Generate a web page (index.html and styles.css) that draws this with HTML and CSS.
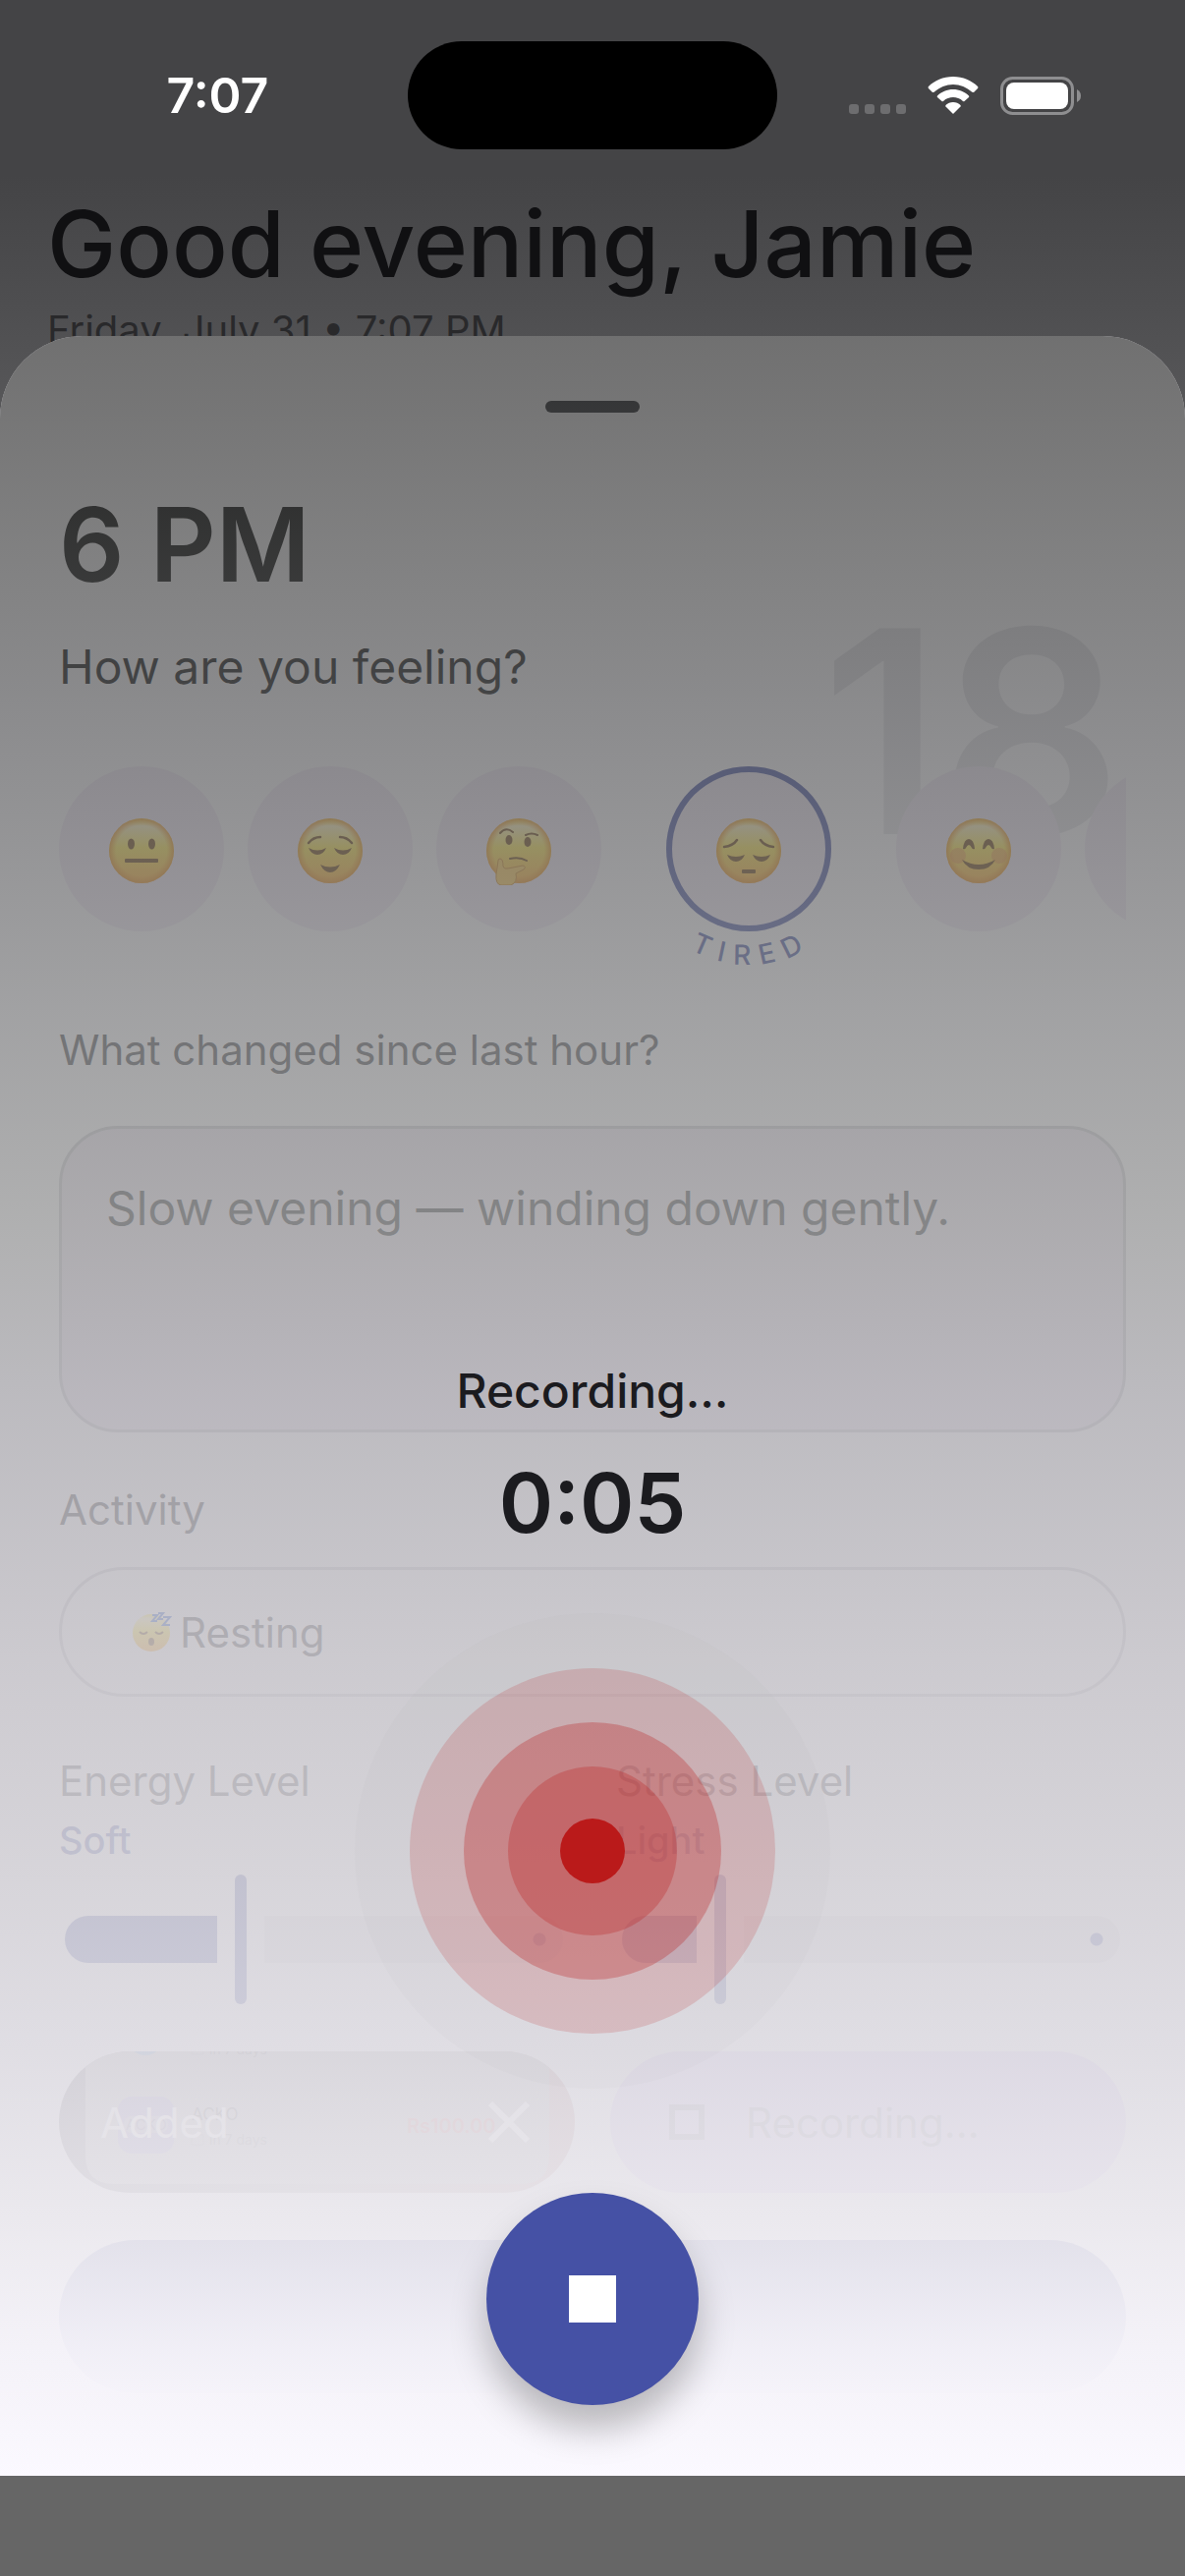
FILE: index.html
```html
<!DOCTYPE html>
<html lang="en">
<head>
  <meta charset="UTF-8">
  <title>Hourly Check-in</title>
  <meta name="viewport" content="width=device-width, initial-scale=1.0">
  <link rel="stylesheet" href="styles.css">
</head>
<body>

  <!-- shared emoji face shapes -->
  <svg class="defs" aria-hidden="true">
    <defs>
      <linearGradient id="skin" x1="0" y1="0" x2="0" y2="1">
        <stop offset="0" stop-color="#ffee50"/>
        <stop offset="0.12" stop-color="#fff0b8"/>
        <stop offset="0.45" stop-color="#ffe648"/>
        <stop offset="1" stop-color="#ffa830"/>
      </linearGradient>
      <radialGradient id="rim">
        <stop offset="0.78" stop-color="#f09020" stop-opacity="0"/>
        <stop offset="1" stop-color="#e88818" stop-opacity="0.85"/>
      </radialGradient>
      <g id="face">
        <circle cx="33" cy="33" r="33" fill="url(#skin)"/>
        <circle cx="33" cy="33" r="33" fill="url(#rim)"/>
      </g>
    </defs>
  </svg>

  <header class="page-header">
    <div class="status-bar">
      <span class="status-time">7:07</span>
      <div class="island"></div>
      <div class="status-icons">
        <svg class="signal" viewBox="0 0 58 10">
          <rect width="10" height="10" rx="3"/>
          <rect x="16" width="10" height="10" rx="3"/>
          <rect x="32" width="10" height="10" rx="3"/>
          <rect x="48" width="10" height="10" rx="3"/>
        </svg>
        <svg class="wifi" viewBox="0 0 52 38">
          <path d="M26 0C16 0 7 4 1 10Q0 11 1 12L5 16Q6 16 7 15.500C12 11 19 8 26 8S40 11 45 15.500Q46 16 47 16L51 12Q52 11 51 10C45 4 36 0 26 0Z"/>
          <path d="M26 13C20 13 14 15.500 10 19.500Q9.300 20 10 21L14.500 25Q15 25.500 16 25C19 22 22.500 21 26 21S33 22 36 25Q37 25.500 37.500 25L42 21Q42.700 20 42 19.500C38 15.500 32 13 26 13Z"/>
          <path d="M26 26C23 26 20.500 27 18.500 29Q18 30 18.500 30.500L25.500 37.500Q26 38 26.500 37.500L33.500 30.500Q34 30 33.500 29C31.500 27 29 26 26 26Z"/>
        </svg>
        <svg class="battery" viewBox="0 0 83 39">
          <rect x="1.500" y="1.500" width="72" height="36" rx="11" fill="none" stroke="#8e8e90" stroke-width="3"/>
          <rect x="6" y="6" width="63" height="27" rx="8" fill="#fff"/>
          <path d="M78 13Q82 15 82 19.500Q82 24 78 26Z" fill="#8e8e90"/>
        </svg>
      </div>
    </div>
    <h1>Good evening, Jamie</h1>
    <p class="date">Friday, July 31 • 7:07 PM</p>
  </header>

  <main class="sheet">
    <form class="entry">
      <div class="handle"></div>
      <h2>6 PM</h2>
      <p class="question">How are you feeling?</p>
      <div class="hour-mark" aria-hidden="true">18</div>

      <div class="moods">
        <button type="button" class="mood" aria-label="Neutral">
          <svg viewBox="0 0 66 68">
            <use href="#face"/>
            <g fill="#6b4010"><ellipse cx="22.500" cy="26" rx="3.500" ry="5.500"/><ellipse cx="43.500" cy="26" rx="3.500" ry="5.500"/><rect x="16" y="41" width="34" height="4" rx="1"/></g>
          </svg>
        </button>
        <button type="button" class="mood" aria-label="Calm">
          <svg viewBox="0 0 66 68">
            <use href="#face"/>
            <g fill="none" stroke="#6b4010" stroke-width="2.500" stroke-linecap="round"><path d="M11 25Q16 19 23 19M55 25Q50 19 43 19"/></g>
            <g fill="#6b4010"><path d="M11 30Q20 35 29 30Q26 37 20 37Q14 37 11 30ZM37 30Q46 35 55 30Q52 37 46 37Q40 37 37 30ZM23 47Q33 52 43 47Q39 55 33 55Q27 55 23 47Z"/></g>
          </svg>
        </button>
        <button type="button" class="mood" aria-label="Thoughtful">
          <svg viewBox="0 0 66 68">
            <use href="#face"/>
            <g fill="#6b4010"><ellipse cx="23" cy="22" rx="3.500" ry="5"/><ellipse cx="42" cy="24" rx="3.500" ry="5"/></g>
            <g fill="none" stroke="#6b4010" stroke-linecap="round" stroke-width="2"><path d="M14 15Q20 8 27 14M40 17Q46 14 52 17M24 41Q34 39 41 43"/></g>
            <path d="M14 41Q17 41 17 49Q18 52 22 51L37 48Q41 49 38 52L30 56Q32 65 25 68H15Q9 67 10 57Q11 51 12 43Q12 41 14 41Z" fill="#ffc850" stroke="#d08820"/>
          </svg>
        </button>
        <button type="button" class="mood selected" aria-label="Tired">
          <svg viewBox="0 0 66 68">
            <use href="#face"/>
            <g fill="none" stroke="#6b4010" stroke-width="2.500" stroke-linecap="round"><path d="M8 29Q17 28 21 22M58 29Q49 28 45 22"/></g>
            <g fill="#6b4010"><path d="M11 37Q20 41 29 37Q26 44 20 44Q14 44 11 37ZM37 37Q46 41 55 37Q52 44 46 44Q40 44 37 37Z"/><rect x="26" y="52" width="14" height="4" rx="1"/></g>
          </svg>
          <svg class="mood-name" viewBox="0 0 248 248">
            <path id="arc" d="M6 124A118 118 0 0 0 242 124" fill="none"/>
            <text><textPath href="#arc" startOffset="51%">TIRED</textPath></text>
          </svg>
        </button>
        <button type="button" class="mood" aria-label="Happy">
          <svg viewBox="0 0 66 68">
            <use href="#face"/>
            <g fill="#f08040" fill-opacity="0.45"><circle cx="12" cy="38" r="8"/><circle cx="54" cy="38" r="8"/></g>
            <path d="M17 31Q18 21 23 21T29 31Q27 32 26 30Q23 24 20 30Q19 32 17 31ZM37 31Q38 21 43 21T49 31Q47 32 46 30Q43 24 40 30Q39 32 37 31ZM16 42Q33 52 50 42Q45 52 33 52Q21 52 16 42Z" fill="#6b4010"/>
          </svg>
        </button>
        <button type="button" class="mood" aria-label="More"></button>
      </div>

      <label class="field-label" for="note">What changed since last hour?</label>
      <textarea id="note" class="note">Slow evening — winding down gently.</textarea>

      <label class="field-label activity-label" for="activity">Activity</label>
      <div class="activity">
        <svg class="sleep" viewBox="0 0 40 40">
          <circle cx="19" cy="21" r="19" fill="url(#skin)"/>
          <g fill="none" stroke="#6b4010" stroke-width="2"><path d="M7 20Q11 24 15 20M23 20Q27 24 31 20"/></g>
          <ellipse cx="19" cy="30" rx="3" ry="4" fill="#6b4010"/>
          <path d="M20 3H25L20 9H25M26 1H31L26 7H31M31 5H38L31 13H38" fill="none" stroke="#3060d0" stroke-width="2"/>
        </svg>
        <select id="activity">
          <option>Resting</option>
        </select>
      </div>

      <div class="levels">
        <div class="level">
          <label for="energy">Energy Level</label>
          <output for="energy">Soft</output>
          <input type="range" id="energy" min="0" max="100" value="35" style="--v: 0.35">
        </div>
        <div class="level">
          <label for="stress">Stress Level</label>
          <output for="stress">Light</output>
          <input type="range" id="stress" min="0" max="100" value="19" style="--v: 0.19">
        </div>
      </div>

      <div class="attachments">
        <button type="button" class="photo">
          <svg class="photo-image" viewBox="0 0 525 144" preserveAspectRatio="none" aria-hidden="true">
            <defs>
              <linearGradient id="photoEdge"><stop offset="0" stop-color="#6c6874"/><stop offset="0.5" stop-color="#a09ca0"/><stop offset="1" stop-color="#c08c90"/></linearGradient>
            </defs>
            <rect width="525" height="144" fill="url(#photoEdge)"/>
            <path d="M27 0H499V106Q499 135 470 135H56Q27 135 27 106Z" fill="#b0aeb0"/>
            <circle cx="88" cy="-14" r="18" fill="#6090c0"/>
            <rect x="60" y="46" width="57" height="58" rx="14" fill="#8c80c0"/>
            <rect x="66" y="66" width="45" height="17" rx="8" fill="#a8a0bc"/>
            <text x="68" y="80" font-size="15" fill="#6c6088">ACKO</text>
            <text x="135" y="70" font-size="17" fill="#505050">ACKO</text>
            <text x="153" y="3" font-size="14" fill="#707070">in 7 days</text>
            <text x="153" y="95" font-size="14" fill="#707070">in 7 days</text>
            <path d="M135 85H147V95H135ZM135 -8H147V3H135Z" fill="none" stroke="#909090"/>
            <text x="354" y="83" font-size="20" font-weight="600" fill="#d06868">Rs100.00</text>
          </svg>
          <span>Added</span>
          <svg class="remove" viewBox="0 0 42 42"><path d="M2 2L40 40M40 2L2 40" stroke="#fff" stroke-width="6"/></svg>
        </button>
        <button type="button" class="voice">
          <span class="voice-icon"></span>
          Recording...
        </button>
      </div>

      <button type="submit" class="save" aria-label="Save"></button>
    </form>

    <section class="recorder">
      <p class="recorder-title">Recording…</p>
      <p class="recorder-time">0:05</p>
      <svg class="pulse" viewBox="0 0 484 484" aria-hidden="true">
        <circle cx="242" cy="242" r="242" fill="#a09890" fill-opacity="0.040"/>
        <circle cx="242" cy="242" r="186" fill="#ba1a1a" fill-opacity="0.160"/>
        <circle cx="242" cy="242" r="131" fill="#ba1a1a" fill-opacity="0.290"/>
        <circle cx="242" cy="242" r="86" fill="#ba1a1a" fill-opacity="0.280"/>
        <circle cx="242" cy="242" r="33" fill="#ba1a1a"/>
      </svg>
      <button type="button" class="stop" aria-label="Stop recording"><span></span></button>
    </section>
  </main>

</body>
</html>
```
FILE: styles.css
```css
:root {
  --primary: #4551a5;
  --surface: #fbf9ff;
  --surface-variant: #efe6f6;
  --text: #1b1b1f;
  --text-soft: #46464f;
  --font-main: Inter, "Liberation Sans", sans-serif;
}

* {
  box-sizing: border-box;
}

body {
  margin: 0;
  min-height: 100vh;
  background: #666;
  font-family: var(--font-main);
  color: var(--text);
}

h1, h2, p {
  margin: 0;
}

button, textarea, select {
  font-family: inherit;
  border: none;
}

.defs {
  position: absolute;
  width: 0;
  height: 0;
}

/* page behind the sheet */
.page-header {
  height: 440px;
  background: linear-gradient(#444446 0, #444446 180px, #4f4f51 320px, #59595b 440px);
}

.status-bar {
  display: grid;
  grid-template-columns: 1fr 376px 1fr;
  align-items: center;
  padding: 42px 0;
}

.status-time {
  padding-left: 28px;
  text-align: center;
  font-size: 50px;
  line-height: 60px;
  font-weight: 600;
  color: #fff;
}

.island {
  height: 110px;
  border-radius: 55px;
  background: #000;
}

.status-icons {
  display: flex;
  align-items: center;
  justify-content: center;
  gap: 22px;
  padding-right: 32px;
  fill: #fff;
}

.signal {
  width: 58px;
  height: 10px;
  margin-top: 28px;
  fill: #6d6d6f;
}

.wifi {
  width: 52px;
  height: 38px;
}

.battery {
  width: 83px;
  height: 39px;
}

h1 {
  padding: 0 48px;
  font-size: 94px;
  line-height: 108px;
  font-weight: 500;
  color: #101012;
}

.date {
  padding: 4px 48px 0;
  font-size: 40px;
  line-height: 60px;
  color: #29292b;
}

/* bottom sheet */
.sheet {
  position: relative;
  margin-top: -98px;
  border-radius: 84px 84px 0 0;
  background: var(--surface);
  overflow: hidden;
}

.entry {
  position: relative;
  display: flex;
  flex-direction: column;
  padding: 66px 60px 84px;
}

.handle {
  align-self: center;
  width: 96px;
  height: 12px;
  border-radius: 6px;
  background: var(--text-soft);
}

h2 {
  margin-top: 74px;
  font-size: 104px;
  line-height: 120px;
  font-weight: 600;
}

.question {
  margin-top: 29px;
  font-size: 48px;
  line-height: 72px;
}

.hour-mark {
  position: absolute;
  top: 258px;
  right: 64px;
  font-size: 288px;
  line-height: 288px;
  font-weight: 600;
  color: #e2e0e8;
}

.moods {
  position: relative;
  display: flex;
  gap: 24px;
  height: 216px;
  margin-top: 65px;
  overflow: hidden;
}

.mood {
  position: relative;
  flex: none;
  display: flex;
  align-items: center;
  justify-content: center;
  width: 168px;
  height: 168px;
  padding: 6px 0 0;
  border-radius: 50%;
  background: var(--surface-variant);
}

.mood svg {
  flex: none;
  width: 66px;
  height: 68px;
}

.mood.selected {
  margin: 0 42px;
  box-shadow: inset 0 0 0 6px var(--primary);
}

.mood .mood-name {
  position: absolute;
  top: -40px;
  left: -40px;
  width: 248px;
  height: 248px;
  overflow: visible;
}

.mood-name text {
  font-size: 28px;
  font-weight: 500;
  letter-spacing: 10px;
  text-anchor: middle;
  fill: var(--primary);
}

.field-label,
.level label {
  font-size: 42px;
  line-height: 60px;
  color: var(--text-soft);
}

.field-label {
  margin-top: 43px;
}

.note {
  height: 312px;
  margin-top: 47px;
  padding: 45px;
  border: 3px solid #cac8d2;
  border-radius: 60px;
  background: var(--surface-variant);
  font-size: 48px;
  line-height: 72px;
  color: var(--text-soft);
  resize: none;
}

.activity-label {
  margin-top: 49px;
}

.activity {
  position: relative;
  margin-top: 28px;
}

.activity select {
  width: 100%;
  height: 132px;
  padding: 0 120px;
  border: 3px solid #cac8d2;
  border-radius: 66px;
  background: transparent;
  font-size: 42px;
  color: var(--text-soft);
  appearance: none;
}

.sleep {
  position: absolute;
  left: 75px;
  top: 46px;
  width: 40px;
  height: 40px;
}

.levels {
  display: grid;
  grid-template-columns: 1fr 1fr;
  gap: 48px;
  margin-top: 56px;
}

.level {
  display: flex;
  flex-direction: column;
}

.level output {
  margin-top: 6px;
  font-size: 38px;
  line-height: 48px;
  font-weight: 500;
  color: var(--primary);
}

.level input {
  --c: calc(var(--v) * (100% - 12px) + 6px);
  appearance: none;
  height: 132px;
  margin: 11px 6px 0;
  background: transparent;
}

.level input::-webkit-slider-runnable-track {
  display: flex;
  align-items: center;
  height: 48px;
  border-radius: 24px;
  background:
    radial-gradient(circle at calc(100% - 24px) 50%, var(--primary) 6px, transparent 7px),
    linear-gradient(to right, var(--primary) calc(var(--c) - 24px), transparent 0, transparent calc(var(--c) + 24px), #e4e1e9 0);
}

.level input::-webkit-slider-thumb {
  appearance: none;
  width: 12px;
  height: 132px;
  margin: -42px 0;
  border-radius: 6px;
  background: var(--primary);
}

.attachments {
  display: grid;
  grid-template-columns: 1fr 1fr;
  gap: 36px;
  margin-top: 48px;
}

.photo,
.voice {
  position: relative;
  display: flex;
  align-items: center;
  height: 144px;
  border-radius: 72px;
  font-size: 42px;
  overflow: hidden;
}

.photo {
  justify-content: space-between;
  padding: 0 46px 0 42px;
  color: #fff;
}

.photo-image {
  position: absolute;
  inset: 0;
  width: 100%;
  height: 100%;
}

.photo span,
.remove {
  position: relative;
}

.remove {
  width: 42px;
  height: 42px;
}

.voice {
  gap: 42px;
  padding: 0 60px;
  background: #d8c4f8;
  color: #8c88a0;
}

.voice-icon {
  width: 36px;
  height: 36px;
  border: 6px solid #8c88a0;
}

.save {
  height: 156px;
  margin-top: 48px;
  border-radius: 78px;
  background: var(--primary);
}

/* recording overlay, fades the form out towards the bottom */
.recorder {
  position: absolute;
  inset: 0;
  display: flex;
  flex-direction: column;
  align-items: center;
  justify-content: flex-end;
  padding-bottom: 72px;
  background: linear-gradient(
    rgba(34, 35, 32, 0.64) 0%,
    rgba(67, 68, 66, 0.665) 10%,
    rgba(90, 91, 91, 0.69) 18%,
    rgba(129, 130, 130, 0.73) 32%,
    rgba(151, 152, 151, 0.76) 41%,
    rgba(173, 172, 176, 0.80) 50%,
    rgba(196, 194, 199, 0.85) 62%,
    rgba(210, 208, 213, 0.885) 72%,
    rgba(221, 219, 225, 0.91) 80%,
    rgba(234, 232, 237, 0.94) 88%,
    rgba(244, 242, 248, 0.98) 94%,
    rgb(247, 245, 251) 97%,
    rgb(251, 249, 255) 100%
  );
}

.recorder-title {
  font-size: 48px;
  line-height: 60px;
  font-weight: 500;
}

.recorder-time {
  margin-top: 36px;
  font-size: 84px;
  line-height: 96px;
  font-weight: 600;
}

.pulse {
  width: 484px;
  height: 484px;
  margin-top: 64px;
}

.stop {
  display: flex;
  align-items: center;
  justify-content: center;
  width: 216px;
  height: 216px;
  margin-top: 106px;
  border-radius: 50%;
  background: var(--primary);
  box-shadow: 0 24px 36px rgba(0, 0, 0, 0.25);
}

.stop span {
  width: 48px;
  height: 48px;
  background: #fff;
}
```
